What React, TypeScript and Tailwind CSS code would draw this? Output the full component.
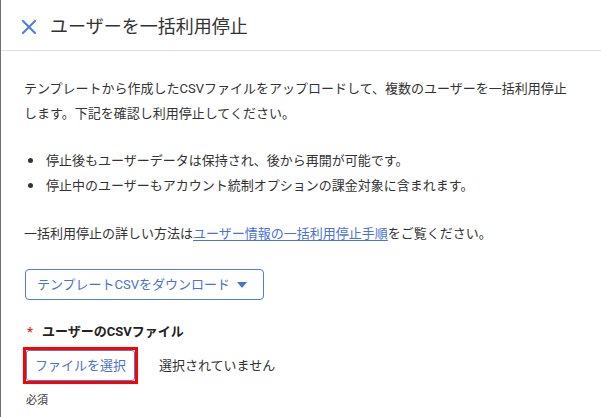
const font = { fontFamily: 'Roboto, "Noto Sans CJK JP", sans-serif' }

const notes = [
  '停止後もユーザーデータは保持され、後から再開が可能です。',
  '停止中のユーザーもアカウント統制オプションの課金対象に含まれます。',
]

export default function App() {
  return (
    <div
      className="w-[601px] h-[417px] overflow-hidden bg-white border-l border-[#6f6f6f] text-[#333]"
      style={font}
    >
      <header className="h-[51px] border-b border-[#e0e0e0] flex items-center gap-[14px] pl-[21px] pt-[4px]">
        <svg width="14" height="14" viewBox="0 0 14 14" className="shrink-0">
          <path d="M1 1L13 13M13 1L1 13" stroke="#4a7fe0" strokeWidth="2" strokeLinecap="square" />
        </svg>
        <h1 className="text-[18px] text-[#333] leading-none">ユーザーを一括利用停止</h1>
      </header>

      <div className="px-[23px] pt-[25px]">
        <p className="text-[13px] leading-[25px]">
          テンプレートから作成したCSVファイルをアップロードして、複数のユーザーを一括利用停止します。下記を確認し利用停止してください。
        </p>

        <ul className="mt-[22px]">
          {notes.map((n) => (
            <li key={n} className="flex items-center text-[13px] leading-[25px]">
              <span className="ml-[4px] mr-[13px] w-[5px] h-[5px] rounded-full bg-[#333]" />
              {n}
            </li>
          ))}
        </ul>

        <p className="mt-[23px] text-[13px] leading-[25px]">
          一括利用停止の詳しい方法は
          <a className="text-[#4a72d8] underline underline-offset-2">ユーザー情報の一括利用停止手順</a>
          をご覧ください。
        </p>

        <button className="mt-[23px] ml-px h-[31px] w-[239px] flex items-center justify-between pl-[11px] pr-[16px] border border-[#4d7ddd] rounded-[4px] text-[13px] text-[#4a72d0]">
          テンプレートCSVをダウンロード
          <svg width="10" height="6" viewBox="0 0 10 6">
            <path d="M0 0h10L5 6z" fill="#4a72d0" />
          </svg>
        </button>

        <div className="mt-[22px] flex items-center text-[13px] leading-[20px] font-bold text-[#222]">
          <span className="ml-[3px] mr-[9px] text-[#d32f2f]">*</span>
          ユーザーのCSVファイル
        </div>

        <div className="mt-[5px] flex items-center">
          <div className="-ml-px border-[3px] border-[#ff0000]">
            <button className="block h-[31px] w-[109px] border border-[#4d7ddd] rounded-[3px] text-[13px] text-[#4a72d0]">
              ファイルを選択
            </button>
          </div>
          <span className="ml-[21px] text-[13px]">選択されていません</span>
        </div>

        <p className="mt-[10px] ml-[2px] text-[11px] leading-[14px] text-[#333]">必須</p>
      </div>
    </div>
  )
}
